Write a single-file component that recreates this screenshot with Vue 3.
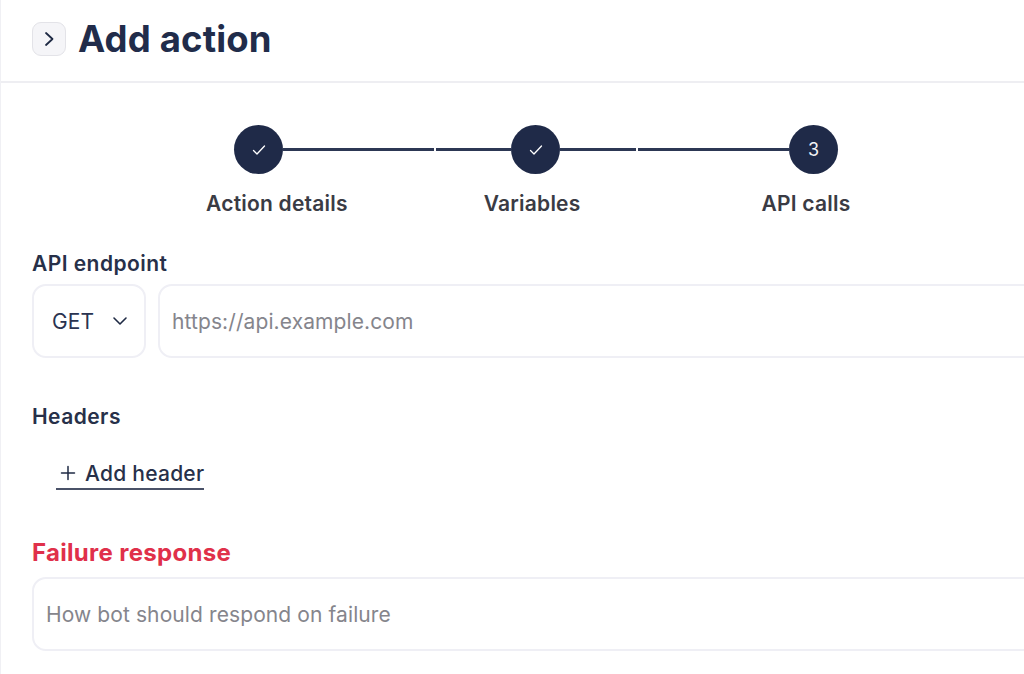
<script setup>
const labels = ['Action details', 'Variables', 'API calls']
</script>

<template>
  <div class="page">
    <header class="top">
      <button class="toggle" aria-label="Expand">
        <svg width="12" height="16" viewBox="0 0 12 16" fill="none"><path d="M3 2 9.500 8 3 14" stroke="#1f2a44" stroke-width="1.800" stroke-linecap="round" stroke-linejoin="round"/></svg>
      </button>
      <h1>Add action</h1>
    </header>
    <main class="body">
      <div class="track">
        <span class="dot"><svg width="14" height="12" viewBox="0 0 14 12" fill="none"><path d="M1.500 6.500 5 10l7.500-8" stroke="#fff" stroke-width="1.300" stroke-linecap="round" stroke-linejoin="round"/></svg></span>
        <span class="line long"></span><span class="line short"></span>
        <span class="dot"><svg width="14" height="12" viewBox="0 0 14 12" fill="none"><path d="M1.500 6.500 5 10l7.500-8" stroke="#fff" stroke-width="1.300" stroke-linecap="round" stroke-linejoin="round"/></svg></span>
        <span class="line short"></span><span class="line long"></span>
        <span class="dot">3</span>
      </div>
      <div class="labels">
        <span v-for="l in labels" :key="l" class="step-label">{{ l }}</span>
      </div>

      <div class="field-label endpoint-label">API endpoint</div>
      <div class="endpoint">
        <div class="box method">
          <span>GET</span>
          <svg width="16" height="10" viewBox="0 0 16 10" fill="none"><path d="M2 2l6 6 6-6" stroke="#1f2a44" stroke-width="1.600" stroke-linecap="round" stroke-linejoin="round"/></svg>
        </div>
        <div class="box url">https://api.example.com</div>
      </div>

      <div class="field-label headers-label">Headers</div>
      <a class="add">
        <svg width="16" height="16" viewBox="0 0 16 16" fill="none"><path d="M8 1.500v13M1.500 8h13" stroke="#1f2a44" stroke-width="1.500" stroke-linecap="round"/></svg>
        <span>Add header</span>
      </a>

      <div class="failure">Failure response</div>
      <div class="box response">How bot should respond on failure</div>
    </main>
  </div>
</template>

<style>
html, body { margin: 0; background: #fff; overflow: hidden; }
</style>

<style scoped>
.page {
  width: 1024px;
  height: 674px;
  overflow: hidden;
  box-sizing: border-box;
  border-left: 1px solid #f0f0f4;
  font-family: Inter, "Liberation Sans", sans-serif;
  color: #1f2a44;
  background: #fff;
}
.top {
  height: 83px;
  box-sizing: border-box;
  border-bottom: 2px solid #eeeef2;
  display: flex;
  align-items: center;
  padding: 0 0 4px 31px;
  gap: 12px;
}
.toggle {
  width: 34px;
  height: 34px;
  padding: 0;
  box-sizing: border-box;
  display: flex;
  align-items: center;
  justify-content: center;
  background: #f5f5f8;
  border: 1px solid #e3e3e8;
  border-radius: 9px;
}
h1 {
  margin: 0;
  font-size: 36.500px;
  line-height: 44px;
  font-weight: 650;
  letter-spacing: 0.15px;
  color: #212c4a;
}
.body { padding: 42px 0 0 31px; }
.track {
  display: flex;
  align-items: center;
  margin-left: 202px;
}
.dot {
  width: 49px;
  height: 49px;
  flex: none;
  border-radius: 50%;
  background: #1f2a48;
  color: #f2f2f5;
  font-size: 18px;
  display: flex;
  align-items: center;
  justify-content: center;
}
.line {
  height: 3px;
  background: #2c3754;
  flex: none;
}
.long { width: 151px; }
.short { width: 75px; margin: 0 0 0 2px; }
.short + .dot { margin-left: 0; }
.dot + .short { margin: 0 2px 0 0; width: 76px; }
.labels {
  display: flex;
  margin: 17px 0 0 174px;
}
.step-label {
  font-size: 21px;
  line-height: 26px;
  font-weight: 600;
  letter-spacing: 0.22px;
  color: #3a3b44;
  white-space: nowrap;
}
.step-label:nth-child(2) { margin-left: 136px; }
.step-label:nth-child(3) { margin-left: 181px; }
.field-label {
  font-size: 21px;
  line-height: 26px;
  font-weight: 600;
  letter-spacing: 0.45px;
  color: #273049;
}
.endpoint-label { margin-top: 34px; }
.endpoint {
  display: flex;
  gap: 12px;
  margin-top: 7px;
}
.box {
  height: 74px;
  box-sizing: border-box;
  border: 2px solid #efeff5;
  border-radius: 14px;
  display: flex;
  align-items: center;
  font-size: 21px;
  letter-spacing: 0.1px;
}
.method {
  width: 114px;
  flex: none;
  padding: 0 16px 0 18px;
  justify-content: space-between;
  color: #2a3350;
}
.url {
  width: 1000px;
  flex: none;
  padding-left: 12px;
  color: #85858c;
}
.headers-label { margin-top: 46px; }
.add {
  display: inline-flex;
  align-items: center;
  gap: 9px;
  box-sizing: border-box;
  width: 148px;
  height: 34px;
  margin: 26px 0 0 24px;
  padding: 2px 0 0 4px;
  border-bottom: 2px solid #4a5268;
  font-size: 21px;
  font-weight: 500;
  letter-spacing: 0.25px;
  color: #273049;
  white-space: nowrap;
}
.add svg { flex: none; }
.failure {
  margin-top: 48px;
  font-size: 24px;
  line-height: 30px;
  font-weight: 700;
  letter-spacing: 0.3px;
  color: #e0304a;
}
.response {
  width: 1100px;
  margin-top: 9px;
  padding-left: 12px;
  color: #85858c;
}
</style>
